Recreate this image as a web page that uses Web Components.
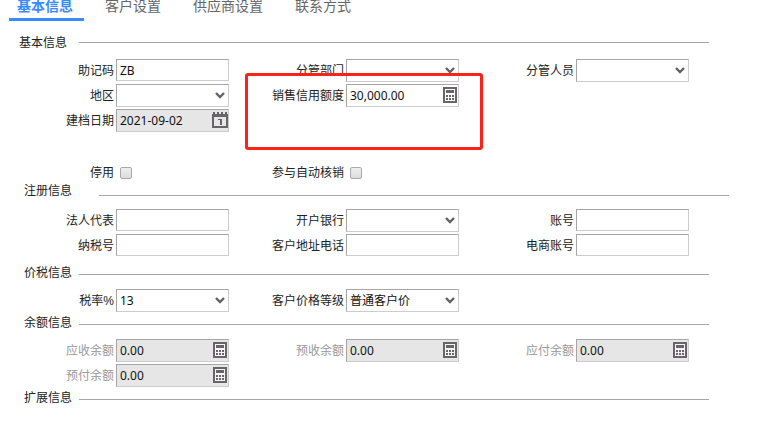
<!DOCTYPE html>
<html lang="zh-CN">
<head>
<meta charset="utf-8">
<title>客户资料</title>
<style>
  body {
    margin: 0;
    background: #fff;
    color: #222;
    font: 12px/18px "Liberation Sans", "Noto Sans CJK SC", sans-serif;
  }
</style>
</head>
<body>

<c-tabs>
  <c-tab selected>基本信息</c-tab>
  <c-tab>客户设置</c-tab>
  <c-tab>供应商设置</c-tab>
  <c-tab>联系方式</c-tab>
</c-tabs>

<c-form>
  <c-section heading="基本信息" lead>
    <c-field label="助记码" value="ZB"></c-field>
    <c-field label="分管部门" type="select"></c-field>
    <c-field label="分管人员" type="select"></c-field>
    <c-field label="地区" type="select"></c-field>
    <c-field label="销售信用额度" type="number" value="30,000.00"><c-mark></c-mark></c-field>
    <c-field label="建档日期" type="date" value="2021-09-02" readonly newline></c-field>
    <c-check slot="options" label="停用"></c-check>
    <c-check slot="options" label="参与自动核销"></c-check>
  </c-section>

  <c-section heading="注册信息" wide>
    <c-field label="法人代表"></c-field>
    <c-field label="开户银行" type="select"></c-field>
    <c-field label="账号"></c-field>
    <c-field label="纳税号"></c-field>
    <c-field label="客户地址电话"></c-field>
    <c-field label="电商账号"></c-field>
  </c-section>

  <c-section heading="价税信息" spaced>
    <c-field label="税率%" type="select" value="13"></c-field>
    <c-field label="客户价格等级" type="select" value="普通客户价"></c-field>
  </c-section>

  <c-section heading="余额信息">
    <c-field label="应收余额" type="number" value="0.00" readonly muted></c-field>
    <c-field label="预收余额" type="number" value="0.00" readonly muted></c-field>
    <c-field label="应付余额" type="number" value="0.00" readonly muted></c-field>
    <c-field label="预付余额" type="number" value="0.00" readonly muted></c-field>
  </c-section>

  <c-section heading="扩展信息"></c-section>
</c-form>

<script>
const icons = {
  select: `<svg width="16" height="16" viewBox="0 0 16 16" aria-hidden="true">
    <path d="M4 6l4 4 4-4" fill="none" stroke="#626167" stroke-width="2.4"/>
  </svg>`,
  number: `<svg width="16" height="16" viewBox="0 0 16 16" aria-hidden="true">
    <path d="M2 1h12v14H2z" fill="#fff" fill-opacity=".6" stroke="#686568" stroke-width="2"/>
    <path d="M4 3h8v3H4zM4 8h2v2H4zM7 8h2v2H7zM10 8h2v2h-2zM4 11h2v2H4zM7 11h2v2H7zM10 11h2v2h-2z" fill="#686568"/>
  </svg>`,
  date: `<svg width="16" height="16" viewBox="0 0 16 16" aria-hidden="true">
    <path d="M1 3h14v12H1z" fill="#e6e6e6" stroke="#686568" stroke-width="2"/>
    <path d="M1 0h2v3H1zM5 0h2v3H5zM9 0h2v3H9zM13 0h2v3h-2zM0 2h16v3H0zM6 7h4v6H8V8H6z" fill="#686568"/>
  </svg>`
}

class BaseElement extends HTMLElement {
  constructor() {
    super()
    this.attachShadow({ mode: 'open' })
  }

  connectedCallback() {
    const template = document.createElement('template')
    template.innerHTML = this.render().trim()
    this.shadowRoot.replaceChildren(template.content.cloneNode(true))
  }
}

customElements.define('c-tabs', class extends BaseElement {
  render() {
    return `
    <style>
      :host {
        display: block;
        margin-top: -4px;
      }
      nav {
        display: flex;
        gap: 13px;
        padding-left: 9px;
      }
    </style>
    <nav role="tablist"><slot></slot></nav>`
  }

  connectedCallback() {
    super.connectedCallback()
    this.addEventListener('click', (evt) => {
      const tab = evt.target.closest('c-tab')
      if (!tab) return
      this.querySelectorAll('c-tab').forEach(el => el.toggleAttribute('selected', el === tab))
    })
  }
})

customElements.define('c-tab', class extends BaseElement {
  static get observedAttributes() {
    return ['selected']
  }

  attributeChangedCallback() {
    const button = this.shadowRoot.querySelector('button')
    if (button) button.setAttribute('aria-selected', this.hasAttribute('selected'))
  }

  render() {
    return `
    <style>
      :host {
        display: block;
      }
      button {
        display: block;
        padding: 0 11px 2px 8px;
        border: none;
        border-bottom: 3px solid transparent;
        background: none;
        color: #666;
        font: 14px/20px "Liberation Sans", "Noto Sans CJK SC", sans-serif;
        white-space: nowrap;
        cursor: pointer;
      }
      :host([selected]) button {
        border-color: #388bff;
        color: #388bff;
        font-weight: bold;
      }
    </style>
    <button type="button" role="tab" aria-selected="${this.hasAttribute('selected')}"><slot></slot></button>`
  }
})

customElements.define('c-form', class extends BaseElement {
  render() {
    return `
    <style>
      :host {
        display: block;
        padding-top: 12px;
      }
      form {
        display: flex;
        flex-direction: column;
        gap: 1px;
      }
    </style>
    <form><slot></slot></form>`
  }
})

customElements.define('c-section', class extends BaseElement {
  render() {
    return `
    <style>
      :host {
        --indent: 24px;
        --line-start: 79px;
        --line-end: 59px;
        --line-drop: 8px;
        display: block;
      }
      :host([lead]) {
        --indent: 19px;
        --line-drop: 10px;
      }
      :host([wide]) {
        --line-start: 99px;
        --line-end: 39px;
        --line-drop: 5px;
      }
      :host([spaced]) {
        margin-top: 5px;
      }
      header {
        display: flex;
        align-items: flex-end;
        margin-bottom: 6px;
        padding-right: var(--line-end);
      }
      :host([wide]) header {
        margin-bottom: 8px;
      }
      h2 {
        box-sizing: border-box;
        flex: 0 0 var(--line-start);
        margin: 0;
        padding-left: var(--indent);
        font: inherit;
        line-height: 20px;
      }
      .line {
        flex: 1;
        height: 1px;
        margin-bottom: var(--line-drop);
        background: #a6a6a6;
      }
      .grid {
        display: grid;
        grid-template-columns: repeat(3, minmax(0, 1fr));
        gap: 2px 1px;
        padding-right: 79px;
      }
      .options {
        display: none;
        margin-top: 32px;
      }
      :host([lead]) .options {
        display: grid;
      }
    </style>
    <header><h2>${this.getAttribute('heading')}</h2><div class="line"></div></header>
    <div class="grid"><slot></slot></div>
    <div class="grid options"><slot name="options"></slot></div>`
  }
})

customElements.define('c-field', class extends BaseElement {
  control(type, value) {
    if (type === 'select') {
      return `<select id="control"><option>${value}</option></select>${icons.select}`
    }
    const input = `<input id="control" type="text" value="${value}" ${this.hasAttribute('readonly') ? 'readonly' : ''}>`
    if (type === 'text') return input
    return `${input}<button type="button" aria-label="${type === 'date' ? '选择日期' : '计算器'}">${icons[type]}</button>`
  }

  render() {
    const type = this.getAttribute('type') || 'text'
    return `
    <style>
      :host {
        position: relative;
        display: grid;
        grid-template-columns: minmax(0, 1fr) 113px;
        gap: 2px;
        height: 23px;
      }
      :host([newline]) {
        grid-column: 1;
      }
      label {
        line-height: 25px;
        text-align: right;
        white-space: nowrap;
      }
      :host([muted]) label {
        color: #999;
      }
      .box {
        box-sizing: border-box;
        display: grid;
        grid-template-columns: minmax(0, 1fr) 16px;
        height: 23px;
        border: 1px solid #a6a6a6;
        border-right-color: #ccc;
        border-bottom-color: #ccc;
        background: #fff;
      }
      .text {
        height: 22px;
      }
      :host([readonly]) .box {
        background: #e6e6e6;
      }
      input, select {
        grid-area: 1 / 1 / 2 / 3;
        box-sizing: border-box;
        width: 100%;
        height: 100%;
        margin: 0;
        padding: 0 16px 0 3px;
        border: none;
        outline: none;
        appearance: none;
        background: none;
        color: #111;
        font: 12px/18px "Noto Sans", "Noto Sans CJK SC", sans-serif;
      }
      button {
        padding: 0;
        border: none;
        background: none;
        cursor: pointer;
      }
      .box > svg, button {
        grid-area: 1 / 2;
        align-self: start;
        z-index: 1;
        margin-top: 2px;
      }
      svg {
        display: block;
        pointer-events: none;
      }
    </style>
    <label for="control">${this.getAttribute('label')}</label>
    <div class="box ${type}">${this.control(type, this.getAttribute('value') || '')}</div>
    <slot></slot>`
  }
})

customElements.define('c-check', class extends BaseElement {
  render() {
    return `
    <style>
      :host {
        display: grid;
        grid-template-columns: minmax(0, 1fr) 113px;
        gap: 2px;
        align-items: center;
        height: 16px;
      }
      label {
        text-align: right;
        white-space: nowrap;
      }
      input {
        box-sizing: border-box;
        width: 12px;
        height: 12px;
        margin: 0 4px;
        border: 1px solid #aaa;
        border-radius: 2px;
        appearance: none;
        background: linear-gradient(#eee, #dcdcdc);
      }
      input:checked {
        background: #388bff;
      }
    </style>
    <label for="control">${this.getAttribute('label')}</label>
    <input id="control" type="checkbox">`
  }
})

// red frame drawn round the field that holds it
customElements.define('c-mark', class extends BaseElement {
  render() {
    return `
    <style>
      :host {
        position: absolute;
        inset: -11px -24px -43px 15px;
        z-index: 2;
        border: 3px solid #fb2318;
        border-radius: 3px;
        pointer-events: none;
      }
    </style>`
  }
})
</script>
</body>
</html>
